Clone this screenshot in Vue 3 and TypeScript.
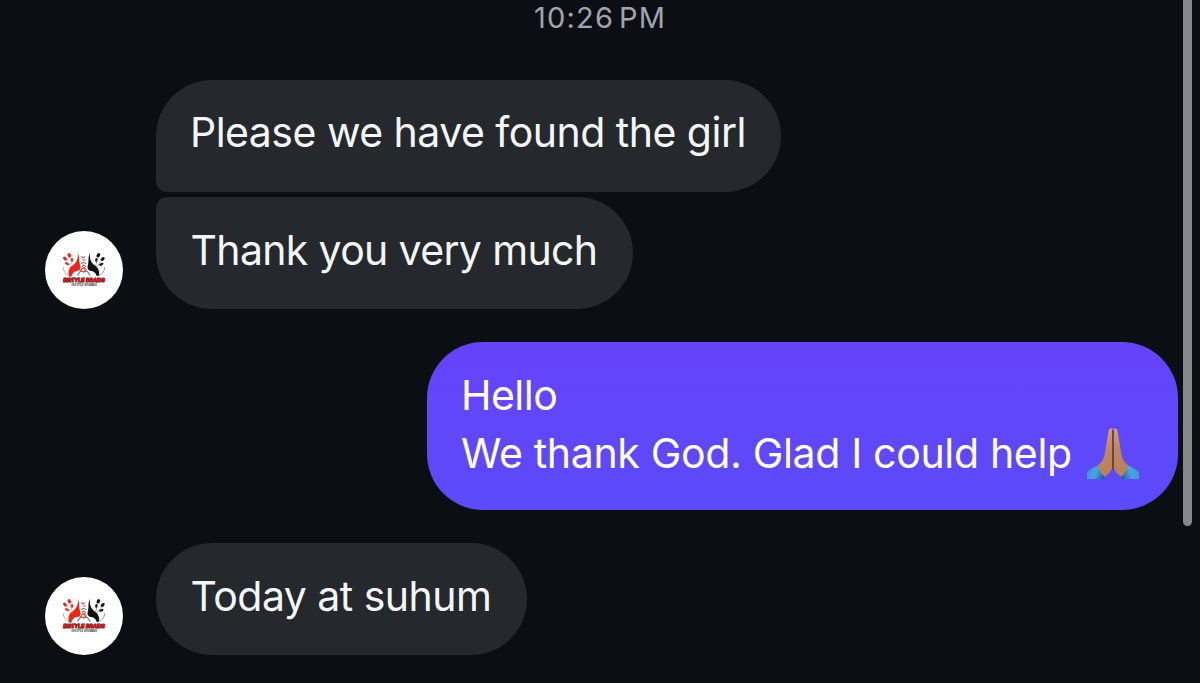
<script setup lang="ts">
interface Message {
  id: string
  lines: string[]
  own?: boolean
  avatar?: boolean
  praying?: boolean
}

const time = '10:26 PM'

const messages: Message[] = [
  { id: 'found', lines: ['Please we have found the girl'] },
  { id: 'thanks', lines: ['Thank you very much'], avatar: true },
  { id: 'reply', lines: ['Hello', 'We thank God. Glad I could help'], own: true, praying: true },
  { id: 'today', lines: ['Today at suhum'], avatar: true },
]
</script>

<template>
  <main class="chat">
    <time class="stamp"><span>{{ time }}</span></time>
    <div v-for="m in messages" :key="m.id" class="row" :class="[m.id, { own: m.own }]">
      <div v-if="!m.own" class="gutter">
        <svg v-if="m.avatar" class="avatar" viewBox="14 14 234 234" role="img" aria-label="Instyle Braids">
          <circle cx="131" cy="131" r="117" fill="#fff" />
          <g fill="#e8271b">
            <path d="M112 80C119 92 115 104 119 115C124 127 119 134 108 134Q96 138 93 151H86C83 139 84 127 93 120C106 112 115 99 112 80Z" />
            <ellipse cx="87" cy="87" rx="5" ry="7" transform="rotate(-25 87 87)" />
            <ellipse cx="74" cy="97" rx="4.5" ry="7" transform="rotate(-45 74 97)" />
            <ellipse cx="95" cy="101" rx="3.5" ry="6" />
            <ellipse cx="80" cy="112" rx="7" ry="3.5" transform="rotate(25 80 112)" />
          </g>
          <path d="M88 91L97 120M76 100L92 122" stroke="#e88" stroke-width="2" fill="none" />
          <path d="M68 122Q71 143 87 148" stroke="#b9a9a5" stroke-width="3" fill="none" />
          <g fill="#111">
            <path d="M149 80C142 92 146 104 143 115C139 127 144 133 154 134Q167 138 169 149H176C178 137 175 127 167 120C154 112 146 99 149 80Z" />
            <ellipse cx="174" cy="87" rx="5" ry="7" transform="rotate(25 174 87)" />
            <ellipse cx="187" cy="98" rx="4.5" ry="7" transform="rotate(50 187 98)" />
            <ellipse cx="168" cy="101" rx="3.5" ry="6" />
            <ellipse cx="183" cy="114" rx="7" ry="3.5" transform="rotate(-25 183 114)" />
          </g>
          <path d="M174 91L165 121M186 100L169 122" stroke="#777" stroke-width="2" fill="none" />
          <path d="M194 122Q190 143 174 148" stroke="#999" stroke-width="3" fill="none" />
          <path d="M123 90L128 95L134 90M126 101H136M122 112L129 108L138 112M125 121L130 116L137 121M122 129Q130 121 139 129M112 148Q119 128 130 137Q142 128 149 148" fill="none" stroke="#85736f" stroke-width="3.5" />
          <path d="M119 136L125 129M138 134L132 130M126 125H134" stroke="#e04438" stroke-width="4" />
          <text class="brand" x="131" y="166" text-anchor="middle" textLength="125" lengthAdjust="spacingAndGlyphs">INSTYLE BRAIDS</text>
          <text class="tagline" x="131" y="178" text-anchor="middle" textLength="77" lengthAdjust="spacingAndGlyphs">100% STYLE 100% BRAIDS</text>
        </svg>
      </div>
      <div class="bubble">
        <p v-for="(line, i) in m.lines" :key="i" class="line" :class="{ long: m.praying && i > 0 }">
          <span>{{ line }}</span>
          <svg v-if="m.praying && i === m.lines.length - 1" class="hands" viewBox="0 0 54 54" role="img" aria-label="Folded hands">
            <defs>
              <linearGradient id="skin" x1="0" y1="0" x2="0" y2="1">
                <stop offset="0" stop-color="#d39b78" />
                <stop offset=".45" stop-color="#bd875f" />
                <stop offset="1" stop-color="#ba8058" />
              </linearGradient>
              <linearGradient id="cuff" x1="0" y1="0" x2="1" y2=".3">
                <stop offset="0" stop-color="#3f8fd6" />
                <stop offset=".55" stop-color="#4ba3e2" />
                <stop offset="1" stop-color="#2a5794" />
              </linearGradient>
            </defs>
            <g v-for="side in 2" :key="side" :transform="side === 2 ? 'translate(54 0) scale(-1 1)' : undefined">
              <path d="M1 53V46Q7 41 15 38L22 47L18 53Z" fill="url(#cuff)" />
              <path d="M12 39Q17 36 18.500 29L22.500 5Q23 1.800 26.500 2.500V42Q24 47 19 51Q13 46 12 39Z" fill="url(#skin)" />
            </g>
            <path d="M27 4V43" stroke="#5c3d33" stroke-width="1.600" />
          </svg>
        </p>
      </div>
    </div>
    <div class="scrollbar"></div>
  </main>
</template>

<style>
html,
body {
  background: #0b0f14;
}
</style>

<style scoped>
.chat {
  position: relative;
  box-sizing: border-box;
  width: 1200px;
  height: 683px;
  overflow: hidden;
  background: #0b0f14;
  color: #f4f7fa;
  font-family: Inter, "Liberation Sans", sans-serif;
}

.stamp {
  display: block;
  height: 80px;
  text-align: center;
  color: #a1a4b0;
  font-size: 29px;
  line-height: 35px;
  letter-spacing: 1.2px;
  word-spacing: -4.5px;
}

.row {
  display: flex;
  padding-left: 45px;
}

.gutter {
  display: flex;
  align-items: flex-end;
  flex: 0 0 111px;
}

.avatar {
  display: block;
  width: 78px;
  height: 78px;
}

.bubble {
  box-sizing: border-box;
  height: 111.5px;
  padding: 23px 34px 0;
  border-radius: 56px;
  background: #25282d;
}

.line {
  display: flex;
  align-items: center;
  margin: 0;
  font-size: 41px;
  line-height: 58.5px;
  letter-spacing: -0.52px;
  white-space: pre;
}

.line.long {
  letter-spacing: -0.33px;
}

.found .bubble {
  width: 625px;
  border-bottom-left-radius: 11px;
}

.thanks {
  margin-top: 5.5px;
}

.thanks .bubble {
  width: 477px;
  padding-top: 23.5px;
  padding-left: 34.5px;
  border-top-left-radius: 11px;
}

.thanks .line {
  letter-spacing: -0.65px;
}

.own {
  justify-content: flex-end;
  margin-top: 33.5px;
  padding: 0 22.5px 0 0;
}

.own .bubble {
  width: 750.5px;
  height: 167.5px;
  padding-top: 23.5px;
  color: #fff;
  background: linear-gradient(#6543fa, #5b4bfa);
}

.today {
  margin-top: 33.5px;
}

.today .bubble {
  width: 371px;
  padding-top: 24px;
  padding-left: 34.5px;
}

.hands {
  flex: none;
  width: 54px;
  height: 54px;
  margin-left: 14px;
}

.brand {
  font: italic 900 18px "Liberation Sans", sans-serif;
  letter-spacing: 0;
  fill: #ee2828;
  stroke: #5a1416;
  stroke-width: 3.5px;
  paint-order: stroke;
}

.tagline {
  font: bold 8px "Liberation Sans", sans-serif;
  fill: #111;
}

.scrollbar {
  position: absolute;
  top: -10px;
  left: 1183px;
  width: 9px;
  height: 536px;
  border-radius: 5px;
  background: #86888c;
}
</style>
